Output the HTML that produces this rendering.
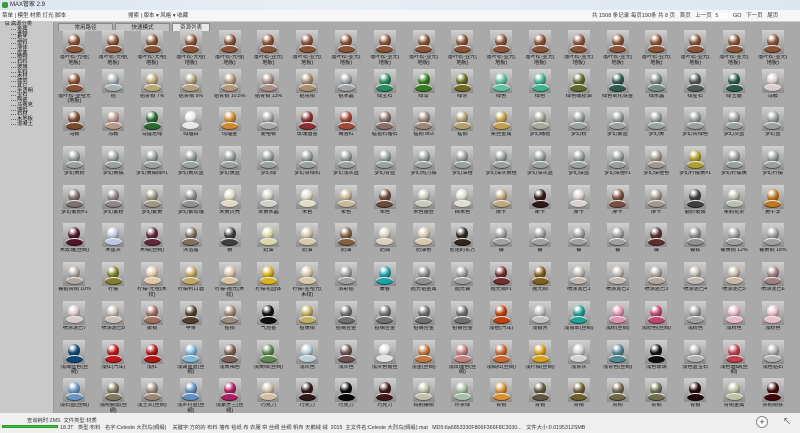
<!DOCTYPE html>
<html><head><meta charset="utf-8"><style>
*{margin:0;padding:0;box-sizing:border-box}
body{width:800px;height:433px;overflow:hidden;background:#a9a9a9;font-family:"Liberation Sans","Noto Sans CJK SC",sans-serif;position:relative;color:#222}
#title{position:absolute;left:0;top:0;width:800px;height:10px;background:linear-gradient(90deg,#dde6ee,#e8eef4 40%,#dde6ee);font-size:6px;line-height:10px;padding-left:10px}
#title:before{content:"";position:absolute;left:2px;top:2px;width:6px;height:6px;border-radius:2px;background:#3a9a3a}
#tb{position:absolute;left:0;top:10px;width:800px;height:12px;background:#f6f6f6;border-bottom:1px solid #ccc;font-size:5.5px;line-height:12px;color:#333;white-space:nowrap}
#left{position:absolute;left:0;top:22px;width:54px;height:391px;background:#c9c9c9;border-right:1px solid #999;font-size:5.3px;line-height:4.75px;color:#111}
#left div{padding-left:17px;position:relative}
#left div:before{content:"";position:absolute;left:11px;top:2px;width:5px;border-top:1px dotted #666}
#tabs{position:absolute;left:55px;top:22px;width:745px;height:9px;background:#a9a9a9}
.tab{position:absolute;top:1px;height:8px;font-size:5.5px;line-height:8px;text-align:center;background:#c4c4c4;border:1px solid #888;border-bottom:0}
#grid{position:absolute;left:55px;top:30px;display:grid;grid-template-columns:repeat(19,38.8px);grid-auto-rows:38.7px}
i{display:block;position:relative;font-style:normal}
i:before{content:"";position:absolute;left:8.4px;top:0;width:22px;height:24px;background:linear-gradient(#d0d0d0,#8c8c8c)}
i span{position:absolute;left:11px;top:4px;width:17px;height:8px;border-radius:50%;top:15px;background:var(--c);box-shadow:inset 0 -1px 0 rgba(0,0,0,.5),inset 0 1px 0 #eee}
i em{position:absolute;left:13.4px;top:4px;width:12px;height:13px;border-radius:50%;background:radial-gradient(circle at 35% 28%,#fff 0 8%,var(--c) 45%,#111 115%)}
i b{position:absolute;left:0;top:25px;width:38.8px;font-weight:normal;font-size:5.2px;line-height:5.6px;text-align:center;color:#111;white-space:nowrap;overflow:hidden}
#st{position:absolute;left:0;top:413px;width:800px;height:20px;background:#efefef;font-size:5.3px;color:#333;white-space:nowrap}
</style></head><body>
<div id="title">MAX管家 2.9</div>
<div id="tb"><span style="margin-left:2px">菜单 | 模型 材质 灯光 脚本</span><span style="position:absolute;left:128px">搜索 | 版本 ▾ 风格 ▾ 收藏</span><span style="position:absolute;left:592px">共 1508 条记录 每页190条 共 8 页 &nbsp; 首页 &nbsp; 上一页 <span style="background:#fff;padding:0 10px 0 2px">5</span> &nbsp; GO &nbsp; 下一页 &nbsp; 尾页</span></div>
<div id="left"><div style="padding-left:5px">⊟ 资源分类</div><div>金属</div><div>食物</div><div>布艺</div><div>塑料</div><div>液体</div><div>皮革</div><div>植物</div><div>石料</div><div>玻璃</div><div>车料</div><div>木材</div><div>建筑</div><div>其它</div><div>半透明</div><div>宝石</div><div>陶瓷</div><div>马赛克</div><div>墙纸</div><div>石材</div><div>木地板</div><div>混凝土</div></div>
<div id="tabs"><div class="tab" style="left:3px;width:55px">常用路径</div><div class="tab" style="left:60px;width:55px">快速模式</div><div class="tab" style="left:117px;width:38px;background:#e8e8e8">资源列表</div></div>
<div id="grid">
<!--R1-->
<i style="--c:#8a5236"><em></em><span></span><b>落叶松-光哑(<br>地板)</b></i><i style="--c:#8a5236"><em></em><span></span><b>落叶松-光哑(<br>地板)</b></i><i style="--c:#8a5236"><em></em><span></span><b>落叶松-光哑(<br>地板)</b></i><i style="--c:#8a5236"><em></em><span></span><b>落叶松-光哑(<br>地板)</b></i><i style="--c:#8a5236"><em></em><span></span><b>落叶松-光哑(<br>地板)</b></i><i style="--c:#8a5236"><em></em><span></span><b>落叶松-亚光(<br>地板)</b></i><i style="--c:#8a5236"><em></em><span></span><b>落叶松-亚光(<br>地板)</b></i><i style="--c:#8a5236"><em></em><span></span><b>落叶松-亚光(<br>地板)</b></i><i style="--c:#8a5236"><em></em><span></span><b>落叶松-亚光(<br>地板)</b></i><i style="--c:#8a5236"><em></em><span></span><b>落叶松-亚光(<br>地板)</b></i><i style="--c:#8a5236"><em></em><span></span><b>落叶松-亚光(<br>地板)</b></i><i style="--c:#8a5236"><em></em><span></span><b>落叶松-亚光(<br>地板)</b></i><i style="--c:#8a5236"><em></em><span></span><b>落叶松-亚光(<br>地板)</b></i><i style="--c:#8a5236"><em></em><span></span><b>落叶松-亚光(<br>地板)</b></i><i style="--c:#8a5236"><em></em><span></span><b>落叶松-亚光(<br>地板)</b></i><i style="--c:#8a5236"><em></em><span></span><b>落叶松-亚光(<br>地板)</b></i><i style="--c:#8a5236"><em></em><span></span><b>落叶松-亚光(<br>地板)</b></i><i style="--c:#8a5236"><em></em><span></span><b>落叶松-亚光(<br>地板)</b></i><i style="--c:#8a5236"><em></em><span></span><b>落叶松-亚光(<br>地板)</b></i>
<!--R2-->
<i style="--c:#8a5236"><em></em><span></span><b>落叶松-亚哑光<br>(地板)</b></i><i style="--c:#a8b0b4"><em></em><span></span><b>铝</b></i><i style="--c:#b8a878"><em></em><span></span><b>铝青铜 7%</b></i><i style="--c:#b0a080"><em></em><span></span><b>铝青铜 9%</b></i><i style="--c:#b09878"><em></em><span></span><b>铝青铜 10.5%</b></i><i style="--c:#a89088"><em></em><span></span><b>铝青铜 13%</b></i><i style="--c:#a89070"><em></em><span></span><b>铝青铜</b></i><i style="--c:#a0a4a8"><em></em><span></span><b>铝冰晶</b></i><i style="--c:#2a8a60"><em></em><span></span><b>绿宝石</b></i><i style="--c:#3a7a20"><em></em><span></span><b>绿漆</b></i><i style="--c:#6a6a20"><em></em><span></span><b>绿茶</b></i><i style="--c:#60c0a0"><em></em><span></span><b>绿色</b></i><i style="--c:#40b090"><em></em><span></span><b>绿色</b></i><i style="--c:#606a30"><em></em><span></span><b>绿色橄榄油</b></i><i style="--c:#305a50"><em></em><span></span><b>绿色氧化铁金</b></i><i style="--c:#788a88"><em></em><span></span><b>绿水晶</b></i><i style="--c:#505a58"><em></em><span></span><b>绿星石</b></i><i style="--c:#2a5a48"><em></em><span></span><b>绿玉髓</b></i><i style="--c:#d8cccc"><em></em><span></span><b>马鞍</b></i>
<!--R3-->
<i style="--c:#7a4a30"><em></em><span></span><b>马鞍</b></i><i style="--c:#b89888"><em></em><span></span><b>马鞍</b></i><i style="--c:#2a6a30"><em></em><span></span><b>马提尼绿</b></i><i style="--c:#e8e8e8"><em></em><span></span><b>玛瑙白</b></i><i style="--c:#d08830"><em></em><span></span><b>玛瑙金</b></i><i style="--c:#a8a8a8"><em></em><span></span><b>麦哈顿</b></i><i style="--c:#8a3030"><em></em><span></span><b>玫瑰酒香</b></i><i style="--c:#a04838"><em></em><span></span><b>梅洛红</b></i><i style="--c:#8a7068"><em></em><span></span><b>锰铝石榴石</b></i><i style="--c:#9a8878"><em></em><span></span><b>锰铜 863</b></i><i style="--c:#b0a070"><em></em><span></span><b>锰铜</b></i><i style="--c:#c0a050"><em></em><span></span><b>柔丝金属</b></i><i style="--c:#a8a898"><em></em><span></span><b>梦幻橄榄</b></i><i style="--c:#9aa0a0"><em></em><span></span><b>梦幻粉</b></i><i style="--c:#9aa0a0"><em></em><span></span><b>梦幻紫蓝</b></i><i style="--c:#9aa0a0"><em></em><span></span><b>梦幻黄</b></i><i style="--c:#9aa0a0"><em></em><span></span><b>梦幻青绿色</b></i><i style="--c:#9aa0a0"><em></em><span></span><b>梦幻灰蓝</b></i><i style="--c:#9aa0a0"><em></em><span></span><b>梦幻蓝</b></i>
<!--R4-->
<i style="--c:#9aa0a0"><em></em><span></span><b>梦幻黄粉</b></i><i style="--c:#9aa0a0"><em></em><span></span><b>梦幻黄橘</b></i><i style="--c:#9aa0a0"><em></em><span></span><b>梦幻黄橘绿#1</b></i><i style="--c:#9aa0a0"><em></em><span></span><b>梦幻黄灰蓝</b></i><i style="--c:#9aa0a0"><em></em><span></span><b>梦幻黄蓝</b></i><i style="--c:#9aa0a0"><em></em><span></span><b>梦幻绿</b></i><i style="--c:#9aa0a0"><em></em><span></span><b>梦幻青绿石</b></i><i style="--c:#9aa0a0"><em></em><span></span><b>梦幻浅灰蓝</b></i><i style="--c:#9aa0a0"><em></em><span></span><b>梦幻青蓝</b></i><i style="--c:#9aa0a0"><em></em><span></span><b>梦幻热力橘</b></i><i style="--c:#9aa0a0"><em></em><span></span><b>梦幻深橙</b></i><i style="--c:#9aa0a0"><em></em><span></span><b>梦幻深灰黄橙</b></i><i style="--c:#9aa0a0"><em></em><span></span><b>梦幻深灰蓝</b></i><i style="--c:#9aa0a0"><em></em><span></span><b>梦幻深蓝</b></i><i style="--c:#9aa0a0"><em></em><span></span><b>梦幻深橙#1</b></i><i style="--c:#a09890"><em></em><span></span><b>梦幻深橙色</b></i><i style="--c:#b0a030"><em></em><span></span><b>梦幻柠檬黄#1</b></i><i style="--c:#9aa0a0"><em></em><span></span><b>梦幻柠檬黄</b></i><i style="--c:#9aa0a0"><em></em><span></span><b>梦幻柠檬</b></i>
<!--R5-->
<i style="--c:#807070"><em></em><span></span><b>梦幻紫粉#1</b></i><i style="--c:#908888"><em></em><span></span><b>梦幻紫粉</b></i><i style="--c:#a09880"><em></em><span></span><b>梦幻紫黄</b></i><i style="--c:#909090"><em></em><span></span><b>梦幻紫玫瑰</b></i><i style="--c:#e0d8c0"><em></em><span></span><b>米黄贝壳</b></i><i style="--c:#d0d0c8"><em></em><span></span><b>米黄水晶</b></i><i style="--c:#e0dcc8"><em></em><span></span><b>米色</b></i><i style="--c:#c8b898"><em></em><span></span><b>米色</b></i><i style="--c:#6a4a38"><em></em><span></span><b>米色</b></i><i style="--c:#c8c8b8"><em></em><span></span><b>米色蕾丝</b></i><i style="--c:#e0dcd0"><em></em><span></span><b>棉米色</b></i><i style="--c:#c0a880"><em></em><span></span><b>摩卡</b></i><i style="--c:#301818"><em></em><span></span><b>摩卡</b></i><i style="--c:#d8d0cc"><em></em><span></span><b>摩卡</b></i><i style="--c:#7a5040"><em></em><span></span><b>摩卡</b></i><i style="--c:#a09890"><em></em><span></span><b>摩卡</b></i><i style="--c:#404040"><em></em><span></span><b>磨砂玻璃</b></i><i style="--c:#b8c0b0"><em></em><span></span><b>茉莉花茶</b></i><i style="--c:#c07820"><em></em><span></span><b>黄牛李</b></i>
<!--R6-->
<i style="--c:#501828"><em></em><span></span><b>木玫瑰(丝绸)</b></i><i style="--c:#c0c8e0"><em></em><span></span><b>木星灰</b></i><i style="--c:#602838"><em></em><span></span><b>木莓(丝绸)</b></i><i style="--c:#807060"><em></em><span></span><b>沐浴露</b></i><i style="--c:#404040"><em></em><span></span><b>钠</b></i><i style="--c:#d8d8a8"><em></em><span></span><b>奶油</b></i><i style="--c:#d8c8b0"><em></em><span></span><b>奶油</b></i><i style="--c:#806040"><em></em><span></span><b>奶油</b></i><i style="--c:#d8d0c0"><em></em><span></span><b>奶油</b></i><i style="--c:#d8c8b0"><em></em><span></span><b>奶油色</b></i><i style="--c:#302820"><em></em><span></span><b>尼诺的东方</b></i><i style="--c:#a0a0a0"><em></em><span></span><b>镍</b></i><i style="--c:#a0a0a0"><em></em><span></span><b>镍</b></i><i style="--c:#a0a0a0"><em></em><span></span><b>镍</b></i><i style="--c:#a0a0a0"><em></em><span></span><b>镍</b></i><i style="--c:#5a3030"><em></em><span></span><b>镍</b></i><i style="--c:#909090"><em></em><span></span><b>镍铁</b></i><i style="--c:#a0a0a0"><em></em><span></span><b>镍黄铜 12%</b></i><i style="--c:#a0a0a0"><em></em><span></span><b>镍黄铜 18%</b></i>
<!--R7-->
<i style="--c:#b0a8a0"><em></em><span></span><b>镍铝青铜 10%</b></i><i style="--c:#808030"><em></em><span></span><b>柠檬</b></i><i style="--c:#e0c8a8"><em></em><span></span><b>柠檬-光哑(木<br>纹)</b></i><i style="--c:#c0a860"><em></em><span></span><b>柠檬利口酒</b></i><i style="--c:#d8c0a0"><em></em><span></span><b>柠檬-抛光(木<br>纹)</b></i><i style="--c:#d8b020"><em></em><span></span><b>柠檬花园体</b></i><i style="--c:#d8c8a8"><em></em><span></span><b>柠檬-亚哑光(<br>木纹)</b></i><i style="--c:#a0a0a0"><em></em><span></span><b>浓彩铅</b></i><i style="--c:#20a0a8"><em></em><span></span><b>暖春</b></i><i style="--c:#909090"><em></em><span></span><b>抛光铝金属</b></i><i style="--c:#a0a0a0"><em></em><span></span><b>抛光镍</b></i><i style="--c:#703030"><em></em><span></span><b>抛光铜#1</b></i><i style="--c:#806020"><em></em><span></span><b>抛光铜</b></i><i style="--c:#c0b8b0"><em></em><span></span><b>喷涂泥巴1</b></i><i style="--c:#c0b8b0"><em></em><span></span><b>喷涂泥巴2</b></i><i style="--c:#b0a8a0"><em></em><span></span><b>喷涂泥巴3</b></i><i style="--c:#c0b8b0"><em></em><span></span><b>喷涂泥巴4</b></i><i style="--c:#c8b8a8"><em></em><span></span><b>喷涂泥巴5</b></i><i style="--c:#a08080"><em></em><span></span><b>喷涂泥巴6</b></i>
<!--R8-->
<i style="--c:#d8c8c8"><em></em><span></span><b>喷涂泥巴7</b></i><i style="--c:#c8c0b8"><em></em><span></span><b>喷涂泥巴8</b></i><i style="--c:#a07060"><em></em><span></span><b>铍铜</b></i><i style="--c:#504030"><em></em><span></span><b>苹果</b></i><i style="--c:#9a8878"><em></em><span></span><b>铅铜</b></i><i style="--c:#101010"><em></em><span></span><b>气泡香</b></i><i style="--c:#c0b060"><em></em><span></span><b>铅黄铜</b></i><i style="--c:#707070"><em></em><span></span><b>铅锡合金</b></i><i style="--c:#707070"><em></em><span></span><b>铅锡合金</b></i><i style="--c:#707070"><em></em><span></span><b>铅锡合金</b></i><i style="--c:#707070"><em></em><span></span><b>铅锡合金</b></i><i style="--c:#c04010"><em></em><span></span><b>浅橙(汽车)</b></i><i style="--c:#c0c0c0"><em></em><span></span><b>浅银河</b></i><i style="--c:#20a098"><em></em><span></span><b>浅翡翠(丝绸)</b></i><i style="--c:#e090b0"><em></em><span></span><b>浅粉(丝绸)</b></i><i style="--c:#c04870"><em></em><span></span><b>浅粉色(丝绸)</b></i><i style="--c:#a0a0a0"><em></em><span></span><b>浅粉色</b></i><i style="--c:#e8b8c8"><em></em><span></span><b>浅粉色</b></i><i style="--c:#e8c0c8"><em></em><span></span><b>浅粉色</b></i>
<!--R9-->
<i style="--c:#104878"><em></em><span></span><b>浅海蓝色(丝<br>绸)</b></i><i style="--c:#c01818"><em></em><span></span><b>浅红(汽车)</b></i><i style="--c:#b01818"><em></em><span></span><b>浅红</b></i><i style="--c:#80b8d8"><em></em><span></span><b>浅湖蓝蓝(丝<br>绸)</b></i><i style="--c:#7a6058"><em></em><span></span><b>浅黄褐色</b></i><i style="--c:#608850"><em></em><span></span><b>浅黄绿(丝绸)</b></i><i style="--c:#b8d0d8"><em></em><span></span><b>浅灰色</b></i><i style="--c:#6a5050"><em></em><span></span><b>浅灰色</b></i><i style="--c:#e0e0e0"><em></em><span></span><b>浅灰色蕾丝</b></i><i style="--c:#c07840"><em></em><span></span><b>浅金(丝绸)</b></i><i style="--c:#c08080"><em></em><span></span><b>浅玫瑰色(丝<br>绸)</b></i><i style="--c:#c86830"><em></em><span></span><b>浅橘红(丝绸)</b></i><i style="--c:#d8a020"><em></em><span></span><b>浅柠檬(丝绸)</b></i><i style="--c:#d0d0d0"><em></em><span></span><b>浅青灰</b></i><i style="--c:#508890"><em></em><span></span><b>浅青色(丝绸)</b></i><i style="--c:#101010"><em></em><span></span><b>浅色玻璃</b></i><i style="--c:#b0b0b0"><em></em><span></span><b>浅色蓝宝石</b></i><i style="--c:#c04050"><em></em><span></span><b>浅色珊瑚(丝<br>绸)</b></i><i style="--c:#b0b0b0"><em></em><span></span><b>浅色钻石</b></i>
<!--R10-->
<i style="--c:#6a98c0"><em></em><span></span><b>浅石蓝(丝绸)</b></i><i style="--c:#807860"><em></em><span></span><b>浅陶瓷鼠(丝<br>绸)</b></i><i style="--c:#9a8878"><em></em><span></span><b>浅土灰(丝绸)</b></i><i style="--c:#6090c0"><em></em><span></span><b>浅乡村蓝(丝<br>绸)</b></i><i style="--c:#b02060"><em></em><span></span><b>浅紫罗兰(丝<br>绸)</b></i><i style="--c:#d0c0a8"><em></em><span></span><b>巧克力</b></i><i style="--c:#301818"><em></em><span></span><b>巧克力</b></i><i style="--c:#080808"><em></em><span></span><b>巧克力</b></i><i style="--c:#401818"><em></em><span></span><b>巧克力</b></i><i style="--c:#c0c0a8"><em></em><span></span><b>钨铜镍铜</b></i><i style="--c:#a8c0a8"><em></em><span></span><b>环茶绿</b></i><i style="--c:#d89030"><em></em><span></span><b>青铜</b></i><i style="--c:#605840"><em></em><span></span><b>青铜</b></i><i style="--c:#706030"><em></em><span></span><b>青铜</b></i><i style="--c:#706848"><em></em><span></span><b>青铜</b></i><i style="--c:#707050"><em></em><span></span><b>青铜</b></i><i style="--c:#200808"><em></em><span></span><b>青铜</b></i><i style="--c:#c0c0a8"><em></em><span></span><b>青铜金属</b></i><i style="--c:#400808"><em></em><span></span><b>青铜铜铁</b></i>
</div>
<div id="st">
<div style="position:absolute;left:27px;top:3px">查询耗时:2MS &nbsp;文件类型:材质</div>
<div style="position:absolute;left:2px;top:12px;width:56px;height:3px;background:#3cc040;border:1px solid #2a9a2a"></div>
<div style="position:absolute;left:60px;top:10px">18.3T &nbsp; 类型:布料 &nbsp; 名字:Celeste 大烈鸟(绸缎) &nbsp; &nbsp;关键字:方的的 布料 墙布 毯纸 布 衣服 帘 丝绸 丝绸 帆布 天鹅绒 绒 &nbsp;2015 &nbsp;主文件名:Celeste 大烈鸟(绸缎).mat &nbsp; MD5:6a6853330F806F366F8C3030... &nbsp; 文件大小:0.0195312SMB</div>
<div style="position:absolute;left:756px;top:3px;width:12px;height:12px;border:1px solid #888;border-radius:50%;background:#fff;text-align:center;line-height:10px;font-size:9px">+</div>
<div style="position:absolute;left:783px;top:3px;font-size:8px">↖</div>
</div>
</body></html>
